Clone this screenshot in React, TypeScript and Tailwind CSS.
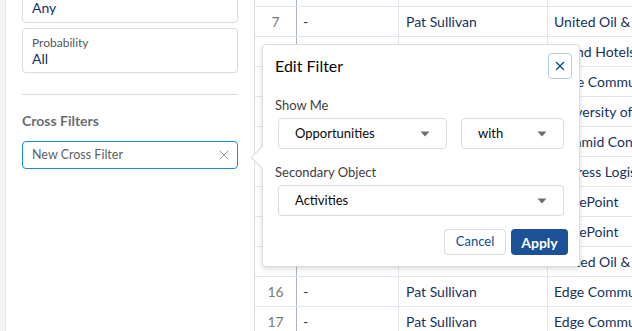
import { X } from 'lucide-react';

const rows = [
  { n: 6, owner: 'Pat Sullivan', account: 'Burlington Textiles Corp' },
  { n: 7, owner: 'Pat Sullivan', account: 'United Oil & Gas Corp.' },
  { n: 8, owner: 'Pat Sullivan', account: 'Grand Hotels & Resorts' },
  { n: 9, owner: 'Pat Sullivan', account: 'Edge Communications' },
  { n: 10, owner: 'Pat Sullivan', account: 'University of Arizona' },
  { n: 11, owner: 'Pat Sullivan', account: 'Pyramid Construction Inc.' },
  { n: 12, owner: 'Pat Sullivan', account: 'Express Logistics and Transport' },
  { n: 13, owner: 'Pat Sullivan', account: 'GenePoint' },
  { n: 14, owner: 'Pat Sullivan', account: 'GenePoint' },
  { n: 15, owner: 'Pat Sullivan', account: 'United Oil & Gas Corp.' },
  { n: 16, owner: 'Pat Sullivan', account: 'Edge Communications' },
  { n: 17, owner: 'Pat Sullivan', account: 'Edge Communications' },
];

function Caret() {
  return (
    <svg width="10" height="6" viewBox="0 0 10 6" className="shrink-0">
      <path d="M0.5 0.5 L9.5 0.5 L5 5.5 Z" fill="#706e6b" />
    </svg>
  );
}

function Select({ value, className }: { value: string; className: string }) {
  return (
    <div
      className={`h-[31px] border border-[#dddbda] rounded-[4px] bg-white flex items-center justify-between pl-[16px] pr-[16px] text-[13px] text-[#080707] ${className}`}
    >
      <span>{value}</span>
      <Caret />
    </div>
  );
}

export default function App() {
  return (
    <div
      className="w-[632px] h-[331px] overflow-hidden relative flex bg-white"
      style={{ fontFamily: 'Lato, "Open Sans", Arial, sans-serif' }}
    >
      {/* Filter sidebar */}
      <div className="w-[255px] shrink-0 flex">
        <div className="w-[6px] shrink-0 bg-[#f4f4f4] border-r border-[#e8e8e8]" />
        <div className="flex-1 px-[16px] border-r border-[#dddbda]">
          <div className="mt-[-22px] h-[45px] border border-[#dddbda] rounded-[4px] px-[9px] flex flex-col justify-end pb-[5px]">
            <span className="text-[14px] leading-[18px] text-[#16325c]">Any</span>
          </div>
          <div className="mt-[5px] h-[45px] border border-[#dddbda] rounded-[4px] px-[9px] pt-[6px] flex flex-col">
            <span className="text-[12px] leading-[16px] text-[#54585c]">Probability</span>
            <span className="text-[14px] leading-[16px] text-[#16325c]">All</span>
          </div>
          <div className="mt-[21px] h-px bg-[#dddbda]" />
          <div className="mt-[17px] text-[14px] leading-[18px] font-bold text-[#6b6d70]">Cross Filters</div>
          <div className="mt-[11px] h-[28px] border border-[#1589ee] rounded-[4px] flex items-center justify-between pl-[9px] pr-[5px]">
            <span className="text-[12.5px] text-[#5c5f63]">New Cross Filter</span>
            <X size={16} strokeWidth={1.5} className="text-[#9a9a9a]" />
          </div>
        </div>
      </div>

      {/* Report table */}
      <div className="flex-1 overflow-hidden">
        <div className="mt-[-23px]">
          {rows.map((r) => (
            <div key={r.n} className="flex h-[30px] border-b border-[#e1e5ec] text-[14px] whitespace-nowrap">
              <div className="w-[42px] shrink-0 flex items-center justify-center text-[#7a7c80] border-r border-[#a9b3c2]">
                {r.n}
              </div>
              <div className="w-[102px] shrink-0 flex items-center pl-[6px] text-[#16325c] border-r border-[#e1e5ec]">
                -
              </div>
              <div className="w-[149px] shrink-0 flex items-center pl-[7px] text-[#16325c] border-r border-[#e1e5ec]">
                {r.owner}
              </div>
              <div className="flex items-center pl-[6px] text-[#16325c]">{r.account}</div>
            </div>
          ))}
        </div>
      </div>

      {/* Edit filter popover */}
      <div className="absolute left-[262px] top-[44px] w-[318px] h-[223px] bg-white border border-[#dddbda] rounded-[4px] shadow-[0_2px_5px_rgba(0,0,0,0.14)]">
        <div className="absolute left-[-9px] top-[104px] w-[17px] h-[17px] rotate-45 bg-white border-l border-b border-[#dddbda]" />
        <div className="relative flex flex-col pt-[11px] pb-[13px]">
          <div className="flex items-start justify-between pl-[12px] pr-[7px]">
            <span className="text-[16px] leading-[20px] font-normal text-[#080707]">Edit Filter</span>
            <button className="w-[24px] h-[26px] -mt-[3px] border border-[#b3cbeb] rounded-[4px] flex items-center justify-center text-[#0b4d8e]">
              <X size={14} strokeWidth={2.4} />
            </button>
          </div>
          <div className="mt-[18px] pl-[12px] text-[13px] leading-[16px] text-[#3e3e3c]">Show Me</div>
          <div className="mt-[5px] flex gap-[14px] px-[15px]">
            <Select value="Opportunities" className="w-[169px]" />
            <Select value="with" className="flex-1" />
          </div>
          <div className="mt-[15px] pl-[12px] text-[13px] leading-[16px] text-[#3e3e3c]">Secondary Object</div>
          <div className="mt-[5px] px-[15px]">
            <Select value="Activities" className="w-full" />
          </div>
          <div className="mt-[13px] flex justify-end gap-[5px] pr-[11px]">
            <button className="w-[62px] h-[26px] border border-[#dddbda] rounded-[4px] bg-white text-[13px] text-[#0b4d8e]">
              Cancel
            </button>
            <button className="w-[57px] h-[26px] rounded-[4px] bg-[#1b5297] text-[14px] font-bold text-white">
              Apply
            </button>
          </div>
        </div>
      </div>
    </div>
  );
}
